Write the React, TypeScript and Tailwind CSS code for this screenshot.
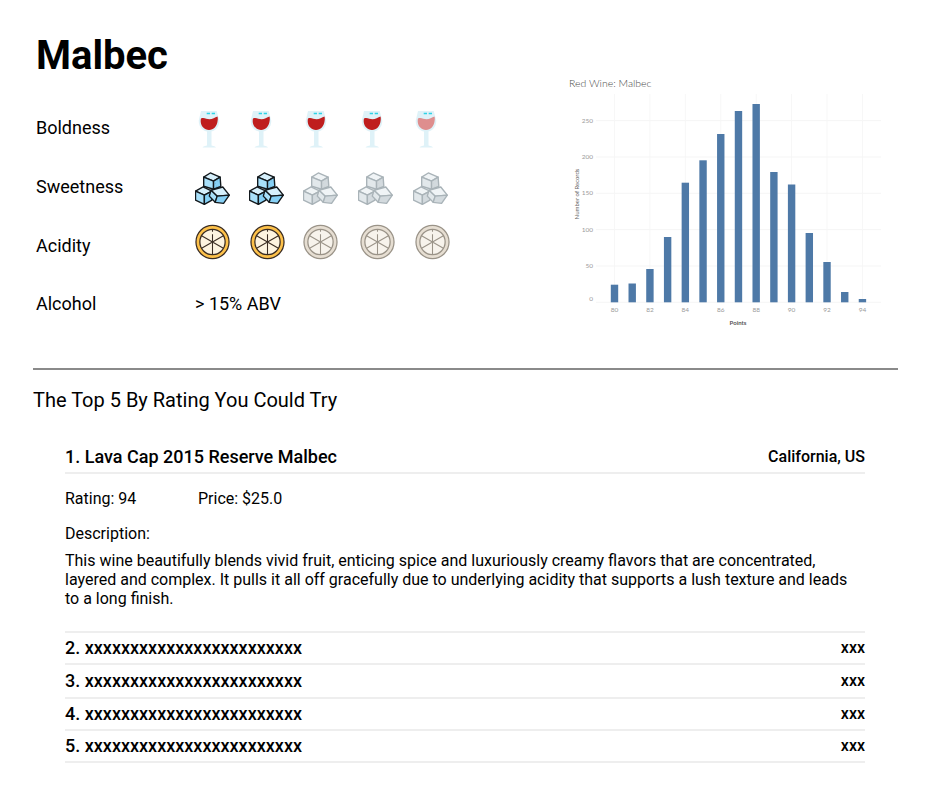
import React from 'react';

const bars = [
  [80, 284.7], [81, 283.5], [82, 269], [83, 237], [84, 182.7], [85, 160.3], [86, 134], [87, 111],
  [88, 104], [89, 172], [90, 184.5], [91, 233], [92, 262], [93, 292], [94, 299],
];

const barX = (points: number) => 615.5 + (points - 80) * 17.71;

function WineGlass({ faded, className }: { faded?: boolean; className?: string }) {
  return (
    <svg width="24" height="38" viewBox="0 0 24 38" className={className}>
      <path d="M4 1h15.700l2.600 9.700c0 6.500-4.500 11-10.300 11S1.700 17.200 1.700 10.700z" fill="#dff2f8" />
      <path
        d="M4 8.500c3-1.500 5.500.8 8.500.8 3 0 5.500-1.800 8-2.800.5 1.500.3 3.200.1 4.500-.5 5-4 9-8.600 9S4.200 16 3.800 12.500c-.2-1.500-.1-3 .2-4z"
        fill={faded ? '#de8e8e' : '#bf1e1e'}
      />
      <path d="M9.700 3.500h3.300M14.700 3.500h3.300" stroke="#2fd3e6" strokeWidth="1.300" />
      <rect x="10" y="21" width="4.500" height="15" fill="#dff2f8" />
      <path d="M5.500 37.500c1-1.500 3.500-2 6.700-2s5.800.5 6.800 2z" fill="#dff2f8" />
    </svg>
  );
}

function IceCubes({ off, className }: { off?: boolean; className?: string }) {
  const stroke = off ? '#a9b3b8' : '#12181c';
  const top = off ? '#f0f4f6' : '#d6f0fc';
  const side = off ? '#e2e8eb' : '#a8e0fa';
  const dark = off ? '#d3dade' : '#86d0f5';
  return (
    <svg width="35" height="33" viewBox="-0.5 -0.5 35.500 33.500" className={className} fill="none" stroke={stroke} strokeWidth="1.400" strokeLinejoin="round">
      <path d="M15 .5l10 4.200-6.700 4-10-4z" fill={top} />
      <path d="M8.300 4.700V14l10 3V8.700z" fill={side} />
      <path d="M25 4.700l.7 9.300-7.400 3V8.700z" fill={dark} />
      <path d="M20.500 11h.1M22.500 8.500h.1M21.500 14h.1" strokeWidth="1" />
      <path d="M7.700 14.700l9 4.300-7.700 4-9-4z" fill={top} />
      <path d="M0 19v9l9 4.300V23z" fill={side} />
      <path d="M16.700 19v9L9 32.300V23z" fill={dark} />
      <path d="M15.700 18l12-3.300 6.600 8.300-12.300 1z" fill={top} />
      <path d="M15.700 18l6.300 6-2 6.300-6-6.300z" fill={side} />
      <path d="M22 24l12.300-1-5.800 8.300-8.500-1z" fill={dark} />
    </svg>
  );
}

function Citrus({ off, className }: { off?: boolean; className?: string }) {
  const stroke = off ? '#9a9388' : '#3a2c22';
  const rim = off ? '#e6ded2' : '#fdc14a';
  const flesh = off ? '#f7f3ec' : '#fdf3df';
  return (
    <svg width="35" height="36" viewBox="0 0 36 36" className={className} fill="none" stroke={stroke}>
      <circle cx="18" cy="18" r="17" fill={rim} strokeWidth="1.300" />
      <circle cx="18" cy="18" r="13" fill={flesh} strokeWidth="1.300" />
      <path d="M18 5v2.500M18 10v21M6.800 11.500l22.400 13M29.200 11.500l-22.400 13" strokeWidth="1.100" />
    </svg>
  );
}

function Chart() {
  const grid = [120.6, 157, 193.3, 229.6, 266, 302.3];
  const vertical = [80, 82, 84, 86, 88, 90, 92, 94];
  return (
    <svg width="330" height="265" viewBox="560 70 330 265" className="shrink-0" style={{ fontFamily: 'Lato, sans-serif' }}>
      <text x="570" y="86.500" fontSize="10.500" fontWeight="300" fill="#4a4a4a">Red Wine: Malbec</text>
      {vertical.map((v) => (
        <line key={v} x1={barX(v)} x2={barX(v)} y1="94" y2="302" stroke="#f7f7f7" />
      ))}
      {grid.map((y) => (
        <line key={y} x1="597" x2="882" y1={y} y2={y} stroke="#f5f5f5" />
      ))}
      {bars.map(([p, top]) => (
        <rect key={p} x={barX(p) - 3.700} y={top} width="7.400" height={302.3 - top} fill="#4e79a7" />
      ))}
      {[0, 50, 100, 150, 200, 250].map((v, i) => (
        <text key={v} x="594" y={grid[5 - i] + (i === 0 ? -1 : 2)} textAnchor="end" fontSize="6.500" fill="#9a9a9a">{v}</text>
      ))}
      {vertical.map((v) => (
        <text key={v} x={barX(v)} y="312" textAnchor="middle" fontSize="6.500" fill="#9a9a9a">{v}</text>
      ))}
      <text x="739" y="324.500" textAnchor="middle" fontSize="6" fontWeight="700" fill="#555555">Points</text>
      <text transform="translate(580 194) rotate(-90)" textAnchor="middle" fontSize="6" fill="#666666">Number of Records</text>
    </svg>
  );
}

function Row({ label, short, children }: { label: string; short?: boolean; children: React.ReactNode }) {
  return (
    <div className={short ? 'flex items-center h-[57px]' : 'flex items-center h-[59px]'}>
      <div className="w-[159px] text-lg">{label}</div>
      {children}
    </div>
  );
}

function Rest({ n, tall }: { n: number; tall?: boolean }) {
  return (
    <div className={tall ? 'flex justify-between items-center h-[34px] border-b-2 border-[#eeeeee] text-lg font-medium' : 'flex justify-between items-center h-8 border-b-2 border-[#eeeeee] text-lg font-medium'}>
      <span>{n}. {'x'.repeat(24)}</span>
      <span className="text-base">xxx</span>
    </div>
  );
}

export default function App() {
  return (
    <div className="min-h-[797px] bg-white pl-[33px] pr-[32px] text-black" style={{ fontFamily: 'Roboto, sans-serif' }}>
      <div className="flex justify-between h-[368px]">
        <div className="pl-[3px]">
          <h1 className="text-[40px] leading-[47px] font-bold pt-[32px] mb-[19px]">Malbec</h1>
          <Row label="Boldness">
            <div className="flex mt-[3px] ml-[2px]">
              <WineGlass />
              <WineGlass className="ml-[28px]" />
              <WineGlass className="ml-[31px]" />
              <WineGlass className="ml-[32px]" />
              <WineGlass className="ml-[30px]" faded />
            </div>
          </Row>
          <Row label="Sweetness">
            <div className="flex mt-[3px]">
              <IceCubes />
              <IceCubes className="ml-[18.500px]" />
              <IceCubes className="ml-[19px]" off />
              <IceCubes className="ml-[20.500px]" off />
              <IceCubes className="ml-[20px]" off />
            </div>
          </Row>
          <Row label="Acidity">
            <div className="flex mb-[8px]">
              <Citrus />
              <Citrus className="ml-[20px]" />
              <Citrus className="ml-[18px]" off />
              <Citrus className="ml-[22px]" off />
              <Citrus className="ml-[20px]" off />
            </div>
          </Row>
          <Row label="Alcohol" short>
            <span className="text-lg">&gt; 15% ABV</span>
          </Row>
        </div>
        <div className="pt-[70px] mr-[9px]">
          <Chart />
        </div>
      </div>
      <div className="border-t-2 border-[#8a8a8a]" />
      <h2 className="text-xl leading-[24px] mt-[18px]">The Top 5 By Rating You Could Try</h2>
      <div className="ml-[32px] mr-[33px] mt-[30px]">
        <div className="flex justify-between items-center h-[32px] border-b-2 border-[#eeeeee] text-lg font-medium">
          <span>1. Lava Cap 2015 Reserve Malbec</span>
          <span className="text-base">California, US</span>
        </div>
        <div className="flex mt-[15px] text-base leading-[19px]">
          <span className="w-[133px]">Rating: 94</span>
          <span>Price: $25.0</span>
        </div>
        <p className="mt-[16px] text-base leading-[19px]">Description:</p>
        <p className="mt-[8px] text-base leading-[19px]">
          This wine beautifully blends vivid fruit, enticing spice and luxuriously creamy flavors that are concentrated, layered and complex. It pulls it all off gracefully due to underlying acidity that supports a lush texture and leads to a long finish.
        </p>
        <div className="mt-[23px] border-t-2 border-[#eeeeee]">
          <Rest n={2} />
          <Rest n={3} tall />
          <Rest n={4} />
          <Rest n={5} />
        </div>
      </div>
    </div>
  );
}
